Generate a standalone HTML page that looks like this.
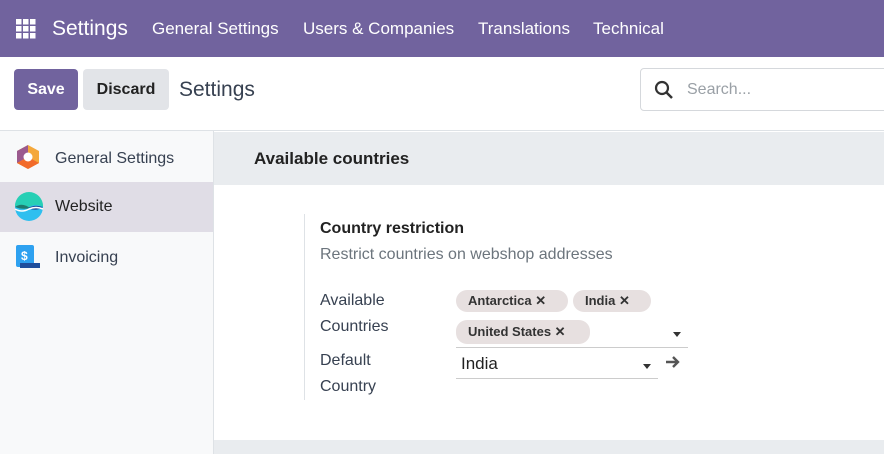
<!DOCTYPE html>
<html><head><style>
*{box-sizing:border-box;margin:0;padding:0}
body{width:884px;height:454px;overflow:hidden;font-family:"Liberation Sans",sans-serif;background:#fff;position:relative;color:#374151}
.nav{position:absolute;left:0;top:0;width:884px;height:57px;background:#71639e;color:#fff}
.nav span{position:absolute;top:19px;font-size:17px}
.cp{position:absolute;top:57px;left:0;width:884px;height:74px;border-bottom:1px solid #dee2e6;background:#fff}
.btn{position:absolute;top:12px;height:41px;border-radius:4px;font-weight:bold;font-size:16px;line-height:41px;text-align:center}
.side{position:absolute;left:0;top:131px;width:214px;height:323px;background:#f8f9fa;border-right:1px solid #dee2e6}
.item{position:absolute;left:0;width:213px;height:50px;font-size:16px;line-height:50px;padding-left:55px;color:#374151}
.tag{position:absolute;height:22px;border-radius:11px;background:#e7e0e0;font-size:13px;font-weight:bold;line-height:22px;padding-left:12px;color:#333}
.lbl{position:absolute;left:320px;font-size:16px;color:#374151}
</style></head><body>
<div class="nav">
<svg style="position:absolute;left:16px;top:19px" width="20" height="20"><g fill="#fff"><rect x="0" y="0" width="5.5" height="5.5"/><rect x="7" y="0" width="5.5" height="5.5"/><rect x="14" y="0" width="5.5" height="5.5"/><rect x="0" y="7" width="5.5" height="5.5"/><rect x="7" y="7" width="5.5" height="5.5"/><rect x="14" y="7" width="5.5" height="5.5"/><rect x="0" y="14" width="5.5" height="5.5"/><rect x="7" y="14" width="5.5" height="5.5"/><rect x="14" y="14" width="5.5" height="5.5"/></g></svg>
<span style="left:52px;top:17px;font-size:21px">Settings</span>
<span style="left:152px">General Settings</span>
<span style="left:303px">Users &amp; Companies</span>
<span style="left:478px">Translations</span>
<span style="left:593px">Technical</span>
</div>
<div class="cp">
<div class="btn" style="left:14px;width:64px;background:#71639e;color:#fff">Save</div>
<div class="btn" style="left:83px;width:86px;background:#e2e4e8;color:#222">Discard</div>
<div style="position:absolute;left:179px;top:21px;font-size:21px;color:#374151">Settings</div>
<div style="position:absolute;left:640px;top:11px;width:260px;height:43px;border:1px solid #d5d8dc;border-radius:4px">
<svg style="position:absolute;left:13px;top:11px" width="20" height="20"><circle cx="8" cy="8" r="6" fill="none" stroke="#333" stroke-width="2.2"/><line x1="12.5" y1="12.5" x2="18" y2="18" stroke="#333" stroke-width="2.5"/></svg>
<span style="position:absolute;left:46px;top:12px;font-size:16px;color:#9aa0a6">Search...</span></div>
</div>
<div class="side">
<div class="item" style="top:3px">General Settings</div>
<div class="item" style="top:51px;background:#e0dde6;color:#222;height:50px">Website</div>
<div class="item" style="top:102px">Invoicing</div>
<svg style="position:absolute;left:16px;top:13px" width="24" height="26"><polygon points="12,1 23,7 23,19 12,25 1,19 1,7" fill="#f4a83b"/><polygon points="1,7 12,1 12,13 1,19" fill="#9b5a8e"/><polygon points="1,19 12,13 23,19 12,25" fill="#f26b2a"/><circle cx="12" cy="13" r="4.5" fill="#fff"/></svg>
<svg style="position:absolute;left:14px;top:61px" width="30" height="30"><circle cx="15" cy="15" r="14" fill="#2ebfef"/><path d="M1,14 A14,14 0 0 1 29,14 L29,15 Q22,11 15,15 Q8,19 1,14Z" fill="#27cfb5"/><path d="M1,15 Q8,10 16,16 Q9,18 1,15Z" fill="#1f7a6e"/><path d="M14,16 Q21,12 29,15 Q22,20 14,16Z" fill="#1d4f9a"/><path d="M1,17 Q8,21 15,17 Q22,14 29,17" fill="none" stroke="#fff" stroke-width="1.5"/></svg>
<svg style="position:absolute;left:16px;top:114px" width="26" height="26"><rect x="0" y="0" width="18" height="22" rx="2" fill="#2ea1f0"/><rect x="4" y="18" width="20" height="5" fill="#1f4e9c"/><text x="5" y="15" font-size="12" font-weight="bold" fill="#fff" font-family="Liberation Sans">$</text></svg>
</div>
<div style="position:absolute;left:214px;top:132px;width:670px;height:53px;background:#e9ecef"></div>
<div style="position:absolute;left:254px;top:149px;font-size:17px;font-weight:bold;color:#222">Available countries</div>
<div style="position:absolute;left:214px;top:440px;width:670px;height:14px;background:#e9ecef"></div>
<div style="position:absolute;left:304px;top:214px;width:1px;height:186px;background:#dee2e6"></div>
<div class="lbl" style="top:220px;font-weight:bold;color:#222">Country restriction</div>
<div class="lbl" style="top:246px;color:#6c757d">Restrict countries on webshop addresses</div>
<div class="lbl" style="top:288px;line-height:26px">Available<br>Countries</div>
<div class="lbl" style="top:348px;line-height:26px">Default<br>Country</div>
<div class="tag" style="left:456px;top:290px;width:112px">Antarctica ✕</div>
<div class="tag" style="left:573px;top:290px;width:78px">India ✕</div>
<div class="tag" style="left:456px;top:320px;width:134px;height:24px;line-height:24px">United States ✕</div>
<div style="position:absolute;left:673px;top:332px;border:4px solid transparent;border-top:5px solid #333"></div>
<div style="position:absolute;left:456px;top:347px;width:232px;height:1px;background:#ccc"></div>
<div style="position:absolute;left:461px;top:354px;font-size:17px;color:#222">India</div>
<div style="position:absolute;left:643px;top:364px;border:4px solid transparent;border-top:5px solid #333"></div>
<div style="position:absolute;left:456px;top:378px;width:202px;height:1px;background:#ccc"></div>
<svg style="position:absolute;left:665px;top:355px" width="16" height="14"><path d="M1,7 H13 M8,2 L13,7 L8,12" fill="none" stroke="#555" stroke-width="2.4"/></svg>
</body></html>
